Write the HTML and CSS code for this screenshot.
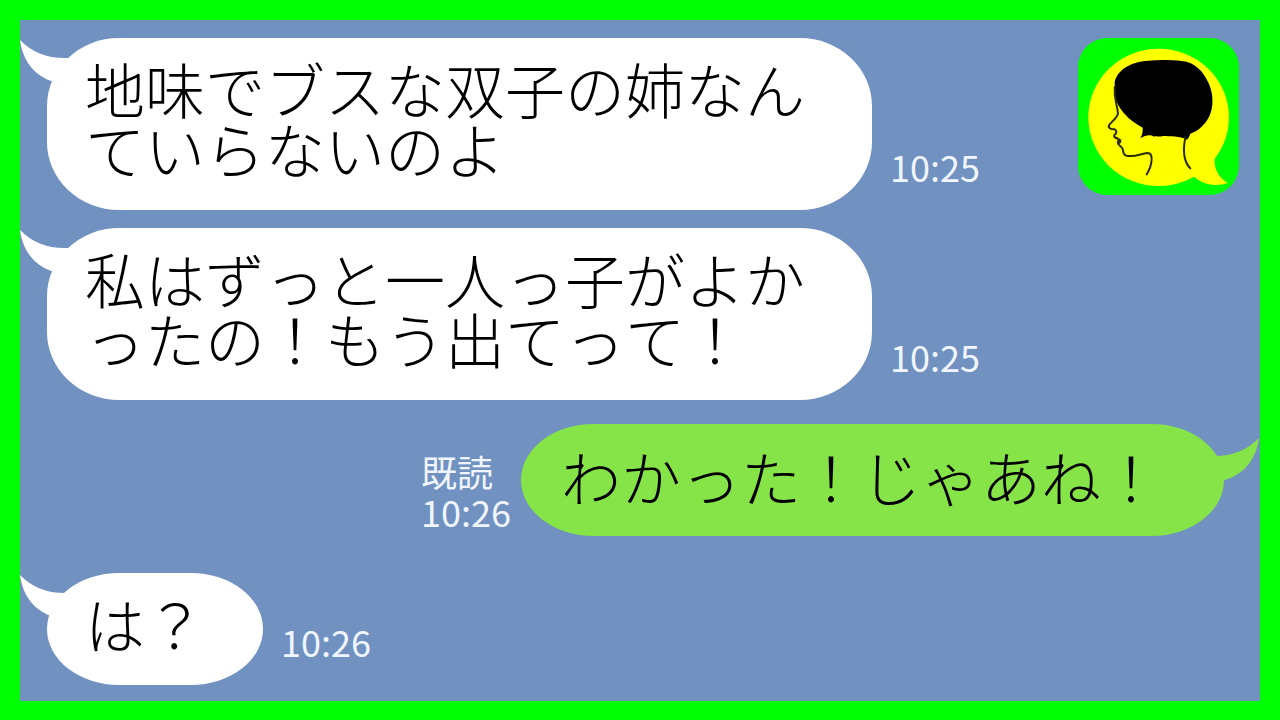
FILE: index.html
```html
<!DOCTYPE html>
<html lang="ja">
<head>
    <meta charset="UTF-8">
    <meta name="viewport" content="width=device-width, initial-scale=1.0">
    <title>トーク</title>
    <link rel="stylesheet" href="styles.css">
</head>
<body>
    <main class="chat">
        <div class="message">
            <div class="bubble">
                <svg class="tail" viewBox="0 0 54 50" aria-hidden="true"><path d="M0 0C12 12 26 18 45 18L54 18L54 42L34 42C15 36 3 22 0 0Z"/></svg>
                <p class="text">地味でブスな双子の姉なん<br>ていらないのよ</p>
            </div>
            <div class="meta"><time>10:25</time></div>
            <svg class="avatar" viewBox="54 52 483 471" role="img" aria-label="アイコン">
                <rect x="54" y="52" width="483" height="471" rx="88" fill="#00ff00"/>
                <ellipse cx="296" cy="290" rx="211" ry="206" fill="#ffff00"/>
                <path d="M390 455C415 487 455 502 504 487C474 469 459 440 465 405Z" fill="#ffff00"/>
                <path d="M164 185C170 150 210 123 265 120C300 117 335 118 365 121C405 125 430 152 446 188C460 218 462 258 448 287C436 312 413 333 391 339L387 349L381 357C360 345 330 348 308 346C298 350 290 344 282 348C270 340 256 344 241 353C247 342 249 332 248 321C225 308 208 297 195 281C180 264 168 245 165 225Z" fill="#000"/>
                <path d="M164 200C162 238 172 254 174 278C172 292 153 304 147 314C144 322 152 326 164 326C170 330 172 337 163 343C160 349 166 352 172 354M174 369C178 377 190 379 189 389C190 399 192 403 200 405C225 410 242 399 262 397C274 397 277 409 274 425C272 443 266 450 260 461M376 350C370 380 366 418 391 443" fill="none" stroke="#2b2b00" stroke-width="6" stroke-linecap="round" stroke-linejoin="round"/>
                <path d="M165 346L176 352L184 357L183 366L177 371L170 365L173 358Z" fill="#2b2b00"/>
            </svg>
        </div>

        <div class="message">
            <div class="bubble">
                <svg class="tail" viewBox="0 0 54 50" aria-hidden="true"><path d="M0 0C12 12 26 18 45 18L54 18L54 42L34 42C15 36 3 22 0 0Z"/></svg>
                <p class="text">私はずっと一人っ子がよか<br>ったの！もう出てって！</p>
            </div>
            <div class="meta"><time>10:25</time></div>
        </div>

        <div class="message mine">
            <div class="meta"><span>既読</span><time>10:26</time></div>
            <div class="bubble short">
                <svg class="tail" viewBox="0 0 54 50" aria-hidden="true"><path d="M0 0C12 12 26 18 45 18L54 18L54 42L34 42C15 36 3 22 0 0Z"/></svg>
                <p class="text">わかった！じゃあね！</p>
            </div>
        </div>

        <div class="message last">
            <div class="bubble short">
                <svg class="tail" viewBox="0 0 54 50" aria-hidden="true"><path d="M0 0C12 12 26 18 45 18L54 18L54 42L34 42C15 36 3 22 0 0Z"/></svg>
                <p class="text">は？</p>
            </div>
            <div class="meta"><time>10:26</time></div>
        </div>
    </main>
</body>
</html>
```
FILE: styles.css
```css
* {
    box-sizing: border-box;
}
body {
    margin: 0;
    font-family: "Noto Sans CJK JP", sans-serif;
}
.chat {
    min-height: 100vh;
    padding: 18px 21px 16px 27px;
    border: 20px solid #00ff00;
    background: #7191c1;
}
.message {
    display: flex;
    align-items: flex-end;
    margin-bottom: 18px;
}
.bubble {
    position: relative;
    flex: none;
    padding: 20px 67px 32px 38px;
    border-radius: 72px / 68px;
    background: #fff;
}
.bubble.short {
    padding-right: 58px;
    border-radius: 72px / 50%;
}
.text {
    margin: 0;
    font-size: 60px;
    font-weight: 300;
    font-kerning: none;
    line-height: 60px;
    color: #000;
    white-space: nowrap;
}
.tail {
    position: absolute;
    top: 2px;
    left: -27px;
    width: 54px;
    height: 50px;
    fill: #fff;
}
.meta {
    display: flex;
    flex-direction: column;
    margin-left: 18px;
    padding-bottom: 24px;
    font-size: 36px;
    line-height: 40px;
    color: #f0f6ff;
}
.avatar {
    align-self: flex-start;
    width: 161px;
    height: 157px;
    margin-left: auto;
}

/* sent messages */
.mine {
    justify-content: flex-end;
    margin: 24px 15px 37px 0;
}
.mine .bubble {
    padding: 22px 63px 30px 40px;
    background: #86e449;
}
.mine .tail {
    top: 14px;
    left: auto;
    right: -35px;
    fill: #86e449;
    transform: scaleX(-1);
}
.mine .meta {
    margin: 0 10px 0 0;
    padding-bottom: 5px;
}
.last {
    margin-bottom: 0;
}
```
